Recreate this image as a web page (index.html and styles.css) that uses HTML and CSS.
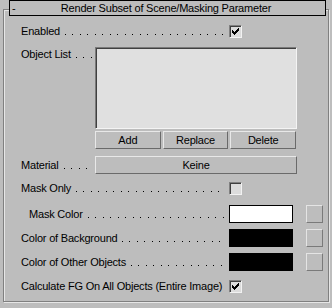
FILE: index.html
```html
<!DOCTYPE html>
<html lang="en">
<head>
  <meta charset="UTF-8">
  <title>Render Subset of Scene/Masking Parameter</title>
  <link rel="stylesheet" href="styles.css">
</head>
<body>
  <div class="rollout">
    <!-- rollout header -->
    <div class="title">
      <span class="toggle">-</span>
      <span class="caption">Render Subset of Scene/Masking Parameter</span>
    </div>
    <div class="group">
      <div class="row">
        <div class="lbl"><span>Enabled</span><span class="lead"></span></div>
        <div class="check">
          <svg width="11" height="11" viewBox="0 0 11 11"><path d="M8 2h1v1H8zM7 3h2v1H7zM2 4h1v1H2zM6 4h3v1H6zM2 5h2v1H2zM5 5h3v1H5zM2 6h5v1H2zM3 7h3v1H3zM4 8h1v1H4z"/></svg>
        </div>
      </div>
      <div class="row top list-row">
        <div class="lbl short"><span>Object List</span><span class="lead"></span></div>
        <div class="listbox"></div>
      </div>
      <div class="btns">
        <div class="btn">Add</div>
        <div class="btn">Replace</div>
        <div class="btn">Delete</div>
      </div>
      <div class="row mat-row">
        <div class="lbl short"><span>Material</span><span class="lead"></span></div>
        <div class="btn wide">Keine</div>
      </div>
      <div class="row mask-row">
        <div class="lbl"><span>Mask Only</span><span class="lead"></span></div>
        <div class="check"></div>
      </div>
      <div class="row color-row first">
        <div class="lbl indent"><span>Mask Color</span><span class="lead"></span></div>
        <div class="swatch white"></div>
        <div class="pick"></div>
      </div>
      <div class="row color-row">
        <div class="lbl"><span>Color of Background</span><span class="lead"></span></div>
        <div class="swatch"></div>
        <div class="pick"></div>
      </div>
      <div class="row color-row">
        <div class="lbl"><span>Color of Other Objects</span><span class="lead"></span></div>
        <div class="swatch"></div>
        <div class="pick"></div>
      </div>
      <div class="row calc-row">
        <div class="lbl"><span>Calculate FG On All Objects (Entire Image)</span></div>
        <div class="check">
          <svg width="11" height="11" viewBox="0 0 11 11"><path d="M8 2h1v1H8zM7 3h2v1H7zM2 4h1v1H2zM6 4h3v1H6zM2 5h2v1H2zM5 5h3v1H5zM2 6h5v1H2zM3 7h3v1H3zM4 8h1v1H4z"/></svg>
        </div>
      </div>
    </div>
  </div>
</body>
</html>
```

FILE: styles.css
```css
body {
  margin: 0;
  background: #bdbdbd;
  font-family: "Liberation Sans", Arial, sans-serif;
  font-size: 11px;
  letter-spacing: -0.2px;
  color: #000;
}
.rollout {
  width: 332px;
  height: 308px;
}
.title {
  position: relative;
  z-index: 1;
  margin-left: 9px;
  width: 317px;
  height: 16px;
  box-sizing: border-box;
  border: 1px solid #000;
  background: #bdbdbd;
  display: flex;
  line-height: 14px;
}
.toggle {
  width: 12px;
  padding-left: 2px;
  box-sizing: border-box;
}
.caption {
  flex: 1;
  text-align: center;
  margin-right: 15px;
}
.group {
  margin: -7px 0 0 3px;
  width: 326px;
  height: 293px;
  box-sizing: border-box;
  border: 1px solid #808080;
  box-shadow: inset 1px 1px 0 #e6e6e6, 1px 1px 0 #e6e6e6;
  padding: 15px 0 0 17px;
}
.row {
  display: flex;
  align-items: center;
  line-height: 13px;
}
.row.top {
  align-items: flex-start;
}
.lbl {
  width: 208px;
  flex: none;
  display: flex;
  white-space: nowrap;
}
.lbl.short {
  width: 74px;
}
.lbl.indent {
  padding-left: 8px;
  box-sizing: border-box;
}
.lead {
  flex: 1;
  height: 13px;
  margin: 0 3px 0 5px;
  background: linear-gradient(90deg, #000 0 1px, transparent 1px 7px, #000 7px 8px, transparent 8px) 0 9px / 15px 1px repeat-x;
}
.check {
  width: 13px;
  height: 13px;
  box-sizing: border-box;
  border: 1px solid;
  border-color: #808080 #f2f2f2 #f2f2f2 #808080;
  box-shadow: inset 1px 1px 0 #404040;
  background: #dcdcdc;
}
.check svg {
  display: block;
}
.list-row {
  margin-top: 9px;
}
.list-row .lbl {
  margin-top: 1px;
}
.listbox {
  width: 202px;
  height: 82px;
  box-sizing: border-box;
  border: 1px solid;
  border-color: #7a7a7a #f4f4f4 #f4f4f4 #7a7a7a;
  box-shadow: inset 1px 1px 0 #404040;
  background: #e0e0e0;
}
.btns {
  display: flex;
  gap: 2px;
  width: 201px;
  margin: 2px 0 0 74px;
}
.btn {
  flex: 1;
  height: 18px;
  box-sizing: border-box;
  border: 1px solid;
  border-color: #e8e8e8 #6a6a6a #6a6a6a #e8e8e8;
  text-align: center;
  line-height: 16px;
}
.btn.wide {
  flex: none;
  width: 202px;
}
.mat-row {
  margin-top: 7px;
}
.mask-row {
  margin-top: 8px;
}
.color-row {
  margin-top: 6px;
}
.color-row.first {
  margin-top: 10px;
}
.swatch {
  width: 64px;
  height: 18px;
  box-sizing: border-box;
  border: 1px solid #000;
  background: #000;
}
.swatch.white {
  background: #fff;
}
.pick {
  width: 17px;
  height: 18px;
  margin-left: 13px;
  box-sizing: border-box;
  border: 1px solid;
  border-color: #e4e4e4 #7a7a7a #7a7a7a #e4e4e4;
}
.calc-row {
  margin-top: 9px;
}
```
